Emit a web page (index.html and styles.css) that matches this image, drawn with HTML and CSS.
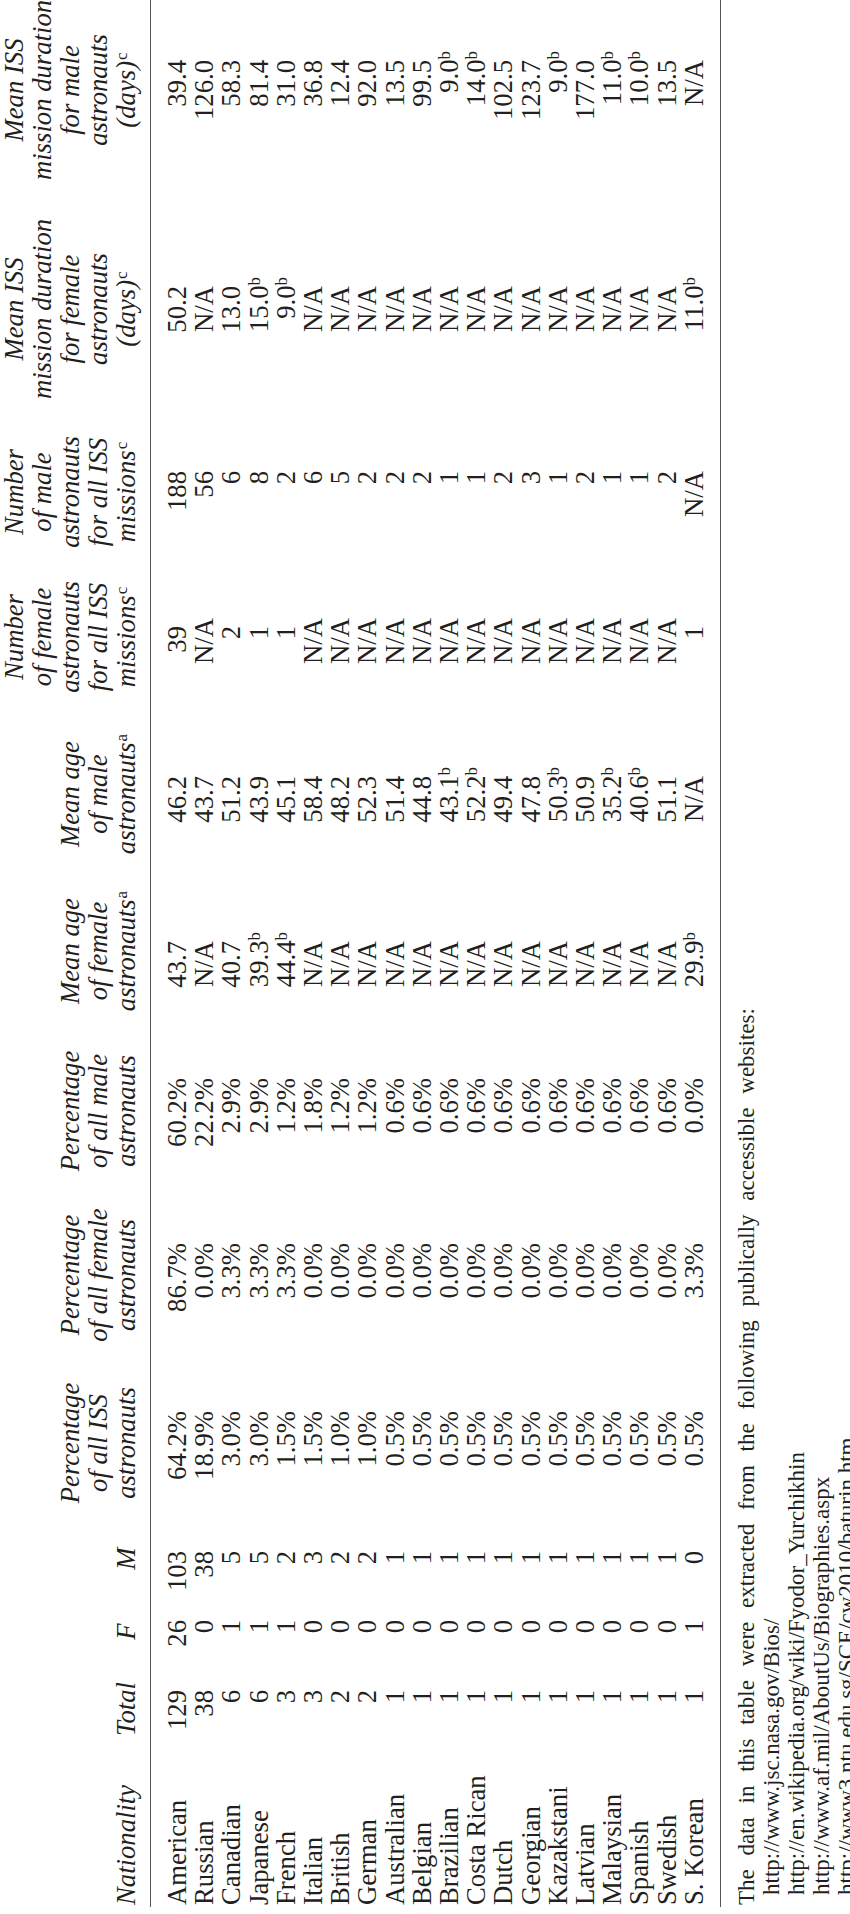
FILE: index.html
```html
<!DOCTYPE html>
<html lang="en">
<head>
<meta charset="utf-8">
<title>ISS astronauts by nationality</title>
<link rel="stylesheet" href="styles.css">
</head>
<body>
<div class="page">
  <div class="thead">
    <div class="hl"><span>Nationality</span></div>
    <div><span>Total</span></div>
    <div><span>F</span></div>
    <div><span>M</span></div>
    <div><span>Percentage<br>of all ISS<br>astronauts</span></div>
    <div><span>Percentage<br>of all female<br>astronauts</span></div>
    <div><span>Percentage<br>of all male<br>astronauts</span></div>
    <div><span>Mean age<br>of female<br>astronauts<sup>a</sup></span></div>
    <div><span>Mean age<br>of male<br>astronauts<sup>a</sup></span></div>
    <div><span>Number<br>of female<br>astronauts<br>for all ISS<br>missions<sup>c</sup></span></div>
    <div><span>Number<br>of male<br>astronauts<br>for all ISS<br>missions<sup>c</sup></span></div>
    <div><span>Mean ISS<br>mission duration<br>for female<br>astronauts<br>(days)<sup>c</sup></span></div>
    <div><span>Mean ISS<br>mission duration<br>for male<br>astronauts<br>(days)<sup>c</sup></span></div>
  </div>
  <div class="rule"></div>
  <div class="tbody">
    <div>American</div><div>129</div><div>26</div><div>103</div><div>64.2%</div><div>86.7%</div><div>60.2%</div><div>43.7</div><div>46.2</div><div>39</div><div>188</div><div>50.2</div><div>39.4</div>
    <div>Russian</div><div>38</div><div>0</div><div>38</div><div>18.9%</div><div>0.0%</div><div>22.2%</div><div>N/A</div><div>43.7</div><div><span class="na">N/A</span></div><div>56</div><div>N/A</div><div>126.0</div>
    <div>Canadian</div><div>6</div><div>1</div><div>5</div><div>3.0%</div><div>3.3%</div><div>2.9%</div><div>40.7</div><div>51.2</div><div>2</div><div>6</div><div>13.0</div><div>58.3</div>
    <div>Japanese</div><div>6</div><div>1</div><div>5</div><div>3.0%</div><div>3.3%</div><div>2.9%</div><div>39.3<sup>b</sup></div><div>43.9</div><div>1</div><div>8</div><div>15.0<sup>b</sup></div><div>81.4</div>
    <div>French</div><div>3</div><div>1</div><div>2</div><div>1.5%</div><div>3.3%</div><div>1.2%</div><div>44.4<sup>b</sup></div><div>45.1</div><div>1</div><div>2</div><div>9.0<sup>b</sup></div><div>31.0</div>
    <div>Italian</div><div>3</div><div>0</div><div>3</div><div>1.5%</div><div>0.0%</div><div>1.8%</div><div>N/A</div><div>58.4</div><div><span class="na">N/A</span></div><div>6</div><div>N/A</div><div>36.8</div>
    <div>British</div><div>2</div><div>0</div><div>2</div><div>1.0%</div><div>0.0%</div><div>1.2%</div><div>N/A</div><div>48.2</div><div><span class="na">N/A</span></div><div>5</div><div>N/A</div><div>12.4</div>
    <div>German</div><div>2</div><div>0</div><div>2</div><div>1.0%</div><div>0.0%</div><div>1.2%</div><div>N/A</div><div>52.3</div><div><span class="na">N/A</span></div><div>2</div><div>N/A</div><div>92.0</div>
    <div>Australian</div><div>1</div><div>0</div><div>1</div><div>0.5%</div><div>0.0%</div><div>0.6%</div><div>N/A</div><div>51.4</div><div><span class="na">N/A</span></div><div>2</div><div>N/A</div><div>13.5</div>
    <div>Belgian</div><div>1</div><div>0</div><div>1</div><div>0.5%</div><div>0.0%</div><div>0.6%</div><div>N/A</div><div>44.8</div><div><span class="na">N/A</span></div><div>2</div><div>N/A</div><div>99.5</div>
    <div>Brazilian</div><div>1</div><div>0</div><div>1</div><div>0.5%</div><div>0.0%</div><div>0.6%</div><div>N/A</div><div>43.1<sup>b</sup></div><div><span class="na">N/A</span></div><div>1</div><div>N/A</div><div>9.0<sup>b</sup></div>
    <div>Costa Rican</div><div>1</div><div>0</div><div>1</div><div>0.5%</div><div>0.0%</div><div>0.6%</div><div>N/A</div><div>52.2<sup>b</sup></div><div><span class="na">N/A</span></div><div>1</div><div>N/A</div><div>14.0<sup>b</sup></div>
    <div>Dutch</div><div>1</div><div>0</div><div>1</div><div>0.5%</div><div>0.0%</div><div>0.6%</div><div>N/A</div><div>49.4</div><div><span class="na">N/A</span></div><div>2</div><div>N/A</div><div>102.5</div>
    <div>Georgian</div><div>1</div><div>0</div><div>1</div><div>0.5%</div><div>0.0%</div><div>0.6%</div><div>N/A</div><div>47.8</div><div><span class="na">N/A</span></div><div>3</div><div>N/A</div><div>123.7</div>
    <div>Kazakstani</div><div>1</div><div>0</div><div>1</div><div>0.5%</div><div>0.0%</div><div>0.6%</div><div>N/A</div><div>50.3<sup>b</sup></div><div><span class="na">N/A</span></div><div>1</div><div>N/A</div><div>9.0<sup>b</sup></div>
    <div>Latvian</div><div>1</div><div>0</div><div>1</div><div>0.5%</div><div>0.0%</div><div>0.6%</div><div>N/A</div><div>50.9</div><div><span class="na">N/A</span></div><div>2</div><div>N/A</div><div>177.0</div>
    <div>Malaysian</div><div>1</div><div>0</div><div>1</div><div>0.5%</div><div>0.0%</div><div>0.6%</div><div>N/A</div><div>35.2<sup>b</sup></div><div><span class="na">N/A</span></div><div>1</div><div>N/A</div><div>11.0<sup>b</sup></div>
    <div>Spanish</div><div>1</div><div>0</div><div>1</div><div>0.5%</div><div>0.0%</div><div>0.6%</div><div>N/A</div><div>40.6<sup>b</sup></div><div><span class="na">N/A</span></div><div>1</div><div>N/A</div><div>10.0<sup>b</sup></div>
    <div>Swedish</div><div>1</div><div>0</div><div>1</div><div>0.5%</div><div>0.0%</div><div>0.6%</div><div>N/A</div><div>51.1</div><div><span class="na">N/A</span></div><div>2</div><div>N/A</div><div>13.5</div>
    <div>S. Korean</div><div>1</div><div>1</div><div>0</div><div>0.5%</div><div>3.3%</div><div>0.0%</div><div>29.9<sup>b</sup></div><div>N/A</div><div>1</div><div>N/A</div><div>11.0<sup>b</sup></div><div>N/A</div>
  </div>
  <div class="rule"></div>
  <div class="notes">
    <div class="lead">The data in this table were extracted from the following publically accessible websites:</div>
    <div class="url">http://www.jsc.nasa.gov/Bios/</div>
    <div class="url">http://en.wikipedia.org/wiki/Fyodor_Yurchikhin</div>
    <div class="url">http://www.af.mil/AboutUs/Biographies.aspx</div>
    <div class="url">http://www3.ntu.edu.sg/SCE/cw2010/baturin.htm</div>
  </div>
</div>
</body>
</html>
```
FILE: styles.css
```css
html, body {
  margin: 0;
  padding: 0;
  background: #ffffff;
  overflow: hidden;
}
body {
  width: 850px;
  height: 1914px;
  position: relative;
}
.page {
  width: 1914px;
  height: 850px;
  transform-origin: 0 0;
  transform: translateY(1914px) rotate(-90deg);
  font-family: "Liberation Serif", "Times New Roman", serif;
  color: #231f20;
  font-size: 26.7px;
}
.thead, .tbody {
  display: grid;
  grid-template-columns: 150px 96px 59px 87px 144px 192px 136px 184px 130px 184px 106px 260px 178px;
}
.thead {
  margin-top: -7px;
  padding-bottom: 10px;
  line-height: 28px;
  font-style: italic;
}
.thead > div {
  display: flex;
  justify-content: center;
  align-items: flex-end;
  white-space: nowrap;
}
.thead > div > span {
  display: inline-block;
  text-align: center;
}
.thead > div.hl {
  justify-content: flex-start;
  padding-left: 2px;
}
sup {
  font-style: normal;
  font-size: 17px;
  line-height: 0;
  vertical-align: 8px;
}
.thead sup {
  margin-left: 1px;
}
.rule {
  height: 1px;
  background: #555;
}
.tbody {
  padding-top: 13px;
  padding-bottom: 12px;
  line-height: 27.2px;
}
.tbody > div {
  text-align: right;
  white-space: nowrap;
}
.tbody sup {
  margin-right: -9px;
}
.tbody .na {
  margin-right: -8px;
}
.tbody > div:nth-child(13n+1) { text-align: left; padding-left: 2px; }
.tbody > div:nth-child(13n+2) { padding-right: 29px; }
.tbody > div:nth-child(13n+3) { padding-right: 18px; }
.tbody > div:nth-child(13n+4) { padding-right: 36px; }
.tbody > div:nth-child(13n+5) { padding-right: 40px; }
.tbody > div:nth-child(13n+6) { padding-right: 64px; }
.tbody > div:nth-child(13n+7) { padding-right: 35px; }
.tbody > div:nth-child(13n+8) { padding-right: 82px; }
.tbody > div:nth-child(13n+9) { padding-right: 47px; }
.tbody > div:nth-child(13n+10) { padding-right: 81px; }
.tbody > div:nth-child(13n+11) { padding-right: 32px; }
.tbody > div:nth-child(13n+12) { padding-right: 107px; }
.tbody > div:nth-child(13n+13) { padding-right: 59px; }
.notes {
  margin-top: 13px;
  font-size: 23px;
  line-height: 25px;
  white-space: nowrap;
}
.notes .lead {
  padding-left: 2px;
  word-spacing: 8px;
}
.notes .url {
  padding-left: 12px;
}
```
